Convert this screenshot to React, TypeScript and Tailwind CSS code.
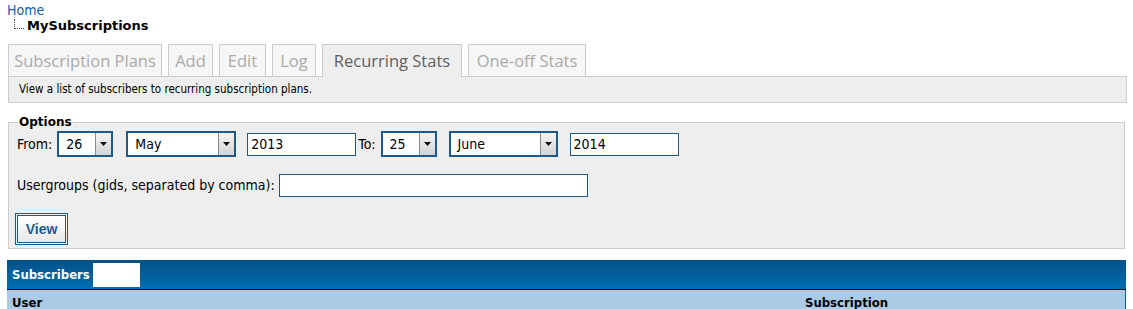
import React from "react";

const tabs = [
  { label: "Subscription Plans", active: false, w: "w-[154px]" },
  { label: "Add", active: false, w: "w-[45px]" },
  { label: "Edit", active: false, w: "w-[47px]" },
  { label: "Log", active: false, w: "w-[44px]" },
  { label: "Recurring Stats", active: true, w: "w-[140px]" },
  { label: "One-off Stats", active: false, w: "w-[118px]" },
];

const FakeSelect = ({ value, width }: { value: string; width: string }) => (
  <div className={`flex h-[26px] items-stretch border-2 border-[#1d5a8a] bg-white ${width}`}>
    <span className="flex-1 pl-[7px] leading-[22px]">{value}</span>
    <span className="flex w-[16px] items-center justify-center border-l border-[#888] bg-gradient-to-b from-[#f4f4f4] to-[#d4d4d4]">
      <svg width="7" height="4" viewBox="0 0 7 4">
        <path d="M0 0h7L3.5 4z" fill="#111" />
      </svg>
    </span>
  </div>
);

const TextBox = ({ value, width }: { value?: string; width: string }) => (
  <div className={`h-[23px] border border-[#1d5a8a] bg-white px-[3px] leading-[21px] ${width}`}>{value}</div>
);

export default function App() {
  return (
    <div className="h-[309px] w-[1133px] overflow-hidden bg-white font-['DejaVu_Sans_Condensed',sans-serif] text-[14px] text-black">
      {/* breadcrumb */}
      <div className="pl-[7px] pt-[2px]">
        <a className="block leading-[16px] text-[#1b5e9f]">Home</a>
        <div className="flex items-end pl-[7px]">
          <span className="mb-[5px] h-[10px] w-[10px] border-b border-l border-dotted border-[#444]" />
          <span className="ml-[3px] font-['DejaVu_Sans',sans-serif] text-[13px] font-bold leading-[16px]">MySubscriptions</span>
        </div>
      </div>

      {/* tabs */}
      <div className="mt-[10px] flex gap-[6px] pl-[8px] font-['Open_Sans',sans-serif] text-[16.5px]">
        {tabs.map((t) => (
          <div
            key={t.label}
            className={
              `${t.w} h-[32px] whitespace-nowrap border border-b-0 border-[#ccc] text-center leading-[31px] ` +
              (t.active ? "relative z-10 -mb-px h-[33px] bg-[#eee] text-[#5f5f5f]" : "bg-[#f6f6f6] text-[#aaa]")
            }
          >
            {t.label}
          </div>
        ))}
      </div>
      <div className="ml-[8px] mr-[6px] h-[27px] border border-[#ccc] bg-[#eee] pl-[10px] text-[11.5px] leading-[25px]">
        View a list of subscribers to recurring subscription plans.
      </div>

      {/* options */}
      <fieldset className="ml-[8px] mr-[8px] mt-[13px] h-[133px] border border-[#ccc] bg-[#eee] px-[8px] pt-0">
        <legend className="ml-[1px] px-[1px] font-['DejaVu_Sans',sans-serif] text-[12px] font-bold leading-[12px]">Options</legend>
        <div className="mt-[3px] flex items-center">
          <span className="mr-[5px]">From:</span>
          <FakeSelect value="26" width="w-[56px]" />
          <span className="w-[13px]" />
          <FakeSelect value="May" width="w-[110px]" />
          <span className="w-[11px]" />
          <TextBox value="2013" width="w-[109px]" />
          <span className="ml-[2px] mr-[5px]">To:</span>
          <FakeSelect value="25" width="w-[56px]" />
          <span className="w-[12px]" />
          <FakeSelect value="June" width="w-[109px]" />
          <span className="w-[12px]" />
          <TextBox value="2014" width="w-[109px]" />
        </div>
        <div className="mt-[17px] flex items-center">
          <span className="mr-[4px]">Usergroups (gids, separated by comma):</span>
          <TextBox width="w-[309px]" />
        </div>
        <button className="-ml-[2px] mt-[16px] h-[32px] w-[53px] border-[3px] border-double border-[#1d5a8a] bg-gradient-to-b from-white to-[#e8e8e8] font-['Liberation_Sans',sans-serif] text-[14px] font-bold text-[#1d5a8a]">
          View
        </button>
      </fieldset>

      {/* subscribers table */}
      <div className="ml-[7px] mr-[7px] mt-[11px]">
        <div className="flex h-[30px] items-center border-b border-black bg-gradient-to-b from-[#035287] to-[#006db3] pl-[5px]">
          <span className="text-[13px] font-bold text-white">Subscribers</span>
          <span className="ml-[3px] h-[24px] w-[47px] bg-white" />
        </div>
        <div className="flex h-[30px] border-r border-[#1d5a8a] bg-[#abcae6] pt-[3px] text-[13px] font-bold">
          <span className="w-[798px] pl-[5px]">User</span>
          <span>Subscription</span>
        </div>
      </div>
    </div>
  );
}
